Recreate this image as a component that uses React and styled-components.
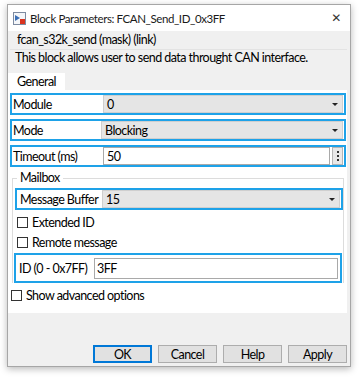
import React from 'react'
import styled, { createGlobalStyle } from 'styled-components'

const GlobalStyle = createGlobalStyle`
  html, body {
    margin: 0;
    padding: 0;
    background: #ffffff;
  }
  body {
    font-family: "Lato", "Liberation Sans", sans-serif;
    font-size: 12.5px;
    letter-spacing: -0.55px;
    color: #000;
  }
`

const Page = styled.div`
  width: 363px;
  height: 382px;
  padding: 4px 0 0 7px;
  box-sizing: border-box;
`

const Window = styled.div`
  width: 344px;
  height: 363px;
  box-sizing: border-box;
  border: 1px solid #a6a6a6;
  background: #f0f0f0;
  box-shadow: 0 2px 7px rgba(0, 0, 0, 0.28);
  display: flex;
  flex-direction: column;
`

const TitleBar = styled.div`
  height: 26px;
  flex: none;
  background: #ffffff;
  display: flex;
  align-items: center;
  padding: 0 9px 0 5px;
  font-size: 11.5px;
  letter-spacing: -0.4px;
  gap: 4px;
`

const TitleText = styled.span`
  flex: 1;
  color: #1a1a1a;
`

const Close = styled.span`
  font-family: "DejaVu Sans", sans-serif;
  font-size: 12px;
  color: #333;
  line-height: 1;
`

const Body = styled.div`
  flex: 1;
  display: flex;
  flex-direction: column;
  padding: 0 3px 0 0;
`

const MaskHead = styled.div`
  height: 16px;
  padding: 1px 0 1px 7px;
  border-bottom: 1px solid #e3e3e3;
  margin-left: 2px;
  line-height: 16px;
`

const Description = styled.div`
  padding: 0 0 0 7px;
  height: 23px;
  line-height: 16px;
  white-space: nowrap;
`

const TabStrip = styled.div`
  display: flex;
`

const Tab = styled.div`
  width: 57px;
  height: 17px;
  background: #ffffff;
  text-align: center;
  line-height: 17px;
`

const Panel = styled.div`
  background: #ffffff;
  height: 223px;
  padding: 3px 1px 0 2px;
  box-sizing: border-box;
  display: flex;
  flex-direction: column;
  gap: 4px;
`

const FieldRow = styled.div`
  display: flex;
  align-items: stretch;
  height: 22px;
  flex: none;
  box-sizing: border-box;
  border: 2px solid #1ea2e8;
  padding: 0 1px 0 0;
  margin: ${p => p.$margin || '0'};
`

const Label = styled.div`
  width: ${p => p.$w}px;
  flex: none;
  display: flex;
  align-items: center;
  padding-left: ${p => p.$pl || 1}px;
  box-sizing: border-box;
  background: #ffffff;
  white-space: nowrap;
`

const Select = styled.div`
  flex: 1;
  display: flex;
  align-items: center;
  justify-content: space-between;
  background: #e5e5e5;
  border: 1px solid #cfcfcf;
  padding: 0 4px 0 3px;
`

const Caret = styled.span`
  width: 0;
  height: 0;
  border-left: 3px solid transparent;
  border-right: 3px solid transparent;
  border-top: 3px solid #222;
`

const Edit = styled.div`
  flex: 1;
  display: flex;
  align-items: center;
  background: #ffffff;
  border: 1px solid #a9a9a9;
  padding-left: 3px;
`

const DotsButton = styled.div`
  width: 9px;
  margin-left: 2px;
  background: #e8e8e8;
  border: 1px solid #b5b5b5;
  display: flex;
  flex-direction: column;
  align-items: center;
  justify-content: center;
  gap: 2px;
  span {
    width: 2px;
    height: 2px;
    background: #333;
  }
`

const Group = styled.fieldset`
  margin: 0 2px 0 2px;
  padding: 3px 0 0 1px;
  border: 1px solid #dcdcdc;
  border-bottom: none;
  display: flex;
  flex-direction: column;
  min-width: 0;
  legend {
    padding: 0 3px;
    margin-left: 3px;
    line-height: 14px;
  }
`

const CheckRow = styled.label`
  display: flex;
  align-items: center;
  gap: 4px;
  flex: none;
  height: ${p => p.$h || 20}px;
  margin-top: ${p => p.$mt || 0}px;
  padding-left: ${p => p.$pl || 3}px;
`

const Box = styled.span`
  width: 9px;
  height: 9px;
  border: 1px solid #333;
  background: #fff;
  flex: none;
`

const IdBox = styled.div`
  border: 2px solid #1ea2e8;
  height: 30px;
  margin-top: 1px;
  box-sizing: border-box;
  display: flex;
  align-items: center;
  padding: 0 2px 0 1px;
  margin-right: 1px;
`

const IdInput = styled.div`
  flex: 1;
  height: 19px;
  border: 1px solid #a9a9a9;
  display: flex;
  align-items: center;
  padding-left: 2px;
`

const Footer = styled.div`
  flex: 1;
  display: flex;
  justify-content: flex-end;
  align-items: flex-end;
  gap: 6px;
  padding: 0 0 3px 0;
`

const Button = styled.div`
  width: 59px;
  height: 18px;
  box-sizing: border-box;
  background: #e1e1e1;
  border: 1px solid ${p => (p.$primary ? '#0078d7' : '#adadad')};
  box-shadow: ${p => (p.$primary ? 'inset 0 0 0 1px #0078d7' : 'none')};
  display: flex;
  align-items: center;
  justify-content: center;
`

const BlockIcon = () => (
  <svg width="13" height="13" viewBox="0 0 13 13">
    <rect x="0.5" y="0.5" width="12" height="12" fill="#f4f6f9" stroke="#7d8aa0" />
    <path d="M2 3 L7 6 L2 9 Z" fill="#3b6fb6" />
    <rect x="7" y="7" width="5" height="5" fill="#d9331f" />
  </svg>
)

const App = () => (
  <Page>
    <GlobalStyle />
    <Window>
      <TitleBar>
        <BlockIcon />
        <TitleText>Block Parameters: FCAN_Send_ID_0x3FF</TitleText>
        <Close>✕</Close>
      </TitleBar>
      <Body>
        <MaskHead>fcan_s32k_send (mask) (link)</MaskHead>
        <Description>This block allows user to send data throught CAN interface.</Description>
        <TabStrip>
          <Tab>General</Tab>
        </TabStrip>
        <Panel>
          <FieldRow>
            <Label $w={91}>Module</Label>
            <Select>0<Caret /></Select>
          </FieldRow>
          <FieldRow>
            <Label $w={89}>Mode</Label>
            <Select>Blocking<Caret /></Select>
          </FieldRow>
          <FieldRow>
            <Label $w={91}>Timeout (ms)</Label>
            <Edit>50</Edit>
            <DotsButton><span /><span /><span /></DotsButton>
          </FieldRow>
          <Group>
            <legend>Mailbox</legend>
            <FieldRow $margin="0 0 0 1px">
              <Label $w={85} $pl={3}>Message Buffer</Label>
              <Select>15<Caret /></Select>
            </FieldRow>
            <CheckRow $mt={2}><Box />Extended ID</CheckRow>
            <CheckRow><Box />Remote message</CheckRow>
            <IdBox>
              <Label $w={77} $pl={2}>ID (0 - 0x7FF)</Label>
              <IdInput>3FF</IdInput>
            </IdBox>
          </Group>
          <CheckRow $pl={1} $h={15} $mt={1}><Box />Show advanced options</CheckRow>
        </Panel>
        <Footer>
          <Button $primary>OK</Button>
          <Button>Cancel</Button>
          <Button>Help</Button>
          <Button>Apply</Button>
        </Footer>
      </Body>
    </Window>
  </Page>
)

export default App
